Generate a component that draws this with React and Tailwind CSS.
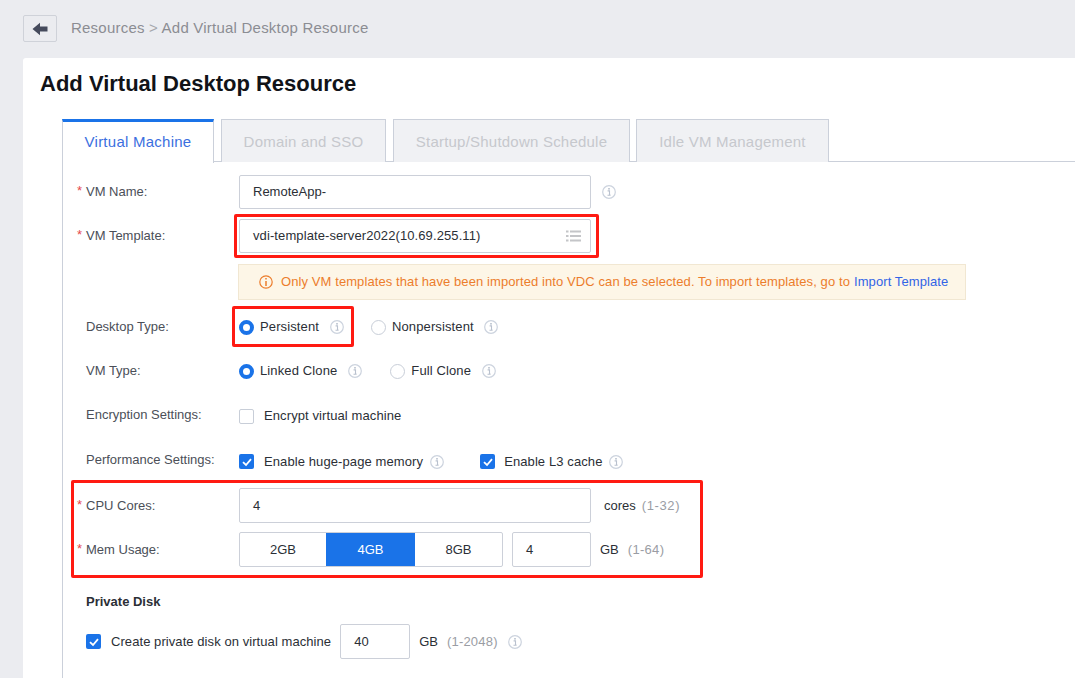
import React from "react";

const Info = ({ className = "" }) => (
  <svg viewBox="0 0 14 14" className={`w-[14px] h-[14px] shrink-0 ${className}`} fill="none">
    <circle cx="7" cy="7" r="6.3" stroke="#ccd3de" strokeWidth="1.2" />
    <rect x="6.2" y="3" width="1.6" height="1.6" fill="#b9c1ce" />
    <path d="M5.6 5.9H7.5V10H8.5M5.5 10.2H8.6" stroke="#b9c1ce" strokeWidth="1.1" />
  </svg>
);

const Radio = ({ on }) =>
  on ? (
    <span className="w-[15px] h-[15px] rounded-full border-[4px] border-[#1a73e8] bg-white shrink-0" />
  ) : (
    <span className="w-[15px] h-[15px] rounded-full border border-[#c8ced8] bg-white shrink-0" />
  );

const Check = ({ on }) =>
  on ? (
    <span className="w-[15px] h-[15px] rounded-[2px] bg-[#1a73e8] flex items-center justify-center shrink-0">
      <svg viewBox="0 0 14 14" className="w-[14px] h-[14px]" fill="none">
        <path d="M3 7.2L6 10L11 4.2" stroke="#fff" strokeWidth="1.8" />
      </svg>
    </span>
  ) : (
    <span className="w-[15px] h-[15px] rounded-[2px] border border-[#c8ced8] bg-white shrink-0" />
  );

const Row = ({ label, req, h = "h-[34px]", mt = "", children }) => (
  <div className={`flex items-center ${h} ${mt}`}>
    <div className="w-[153px] shrink-0 relative text-[#4b4f58]">
      {req && <span className="absolute left-[-9px] top-[-1px] text-[#e5484d]">*</span>}
      {label}
    </div>
    {children}
  </div>
);

const Input = ({ value, className = "", children }) => (
  <div className={`h-full flex items-center justify-between rounded-[2px] border border-[#ccd0d9] bg-white pl-[13px] pr-[9px] text-[#2b2f36] ${className}`}>
    <span>{value}</span>
    {children}
  </div>
);

const Tab = ({ children, className = "" }) => (
  <div className={`h-[43px] pt-[2px] flex items-center justify-center border border-b-0 border-[#cbd0da] bg-[#f0f1f4] text-[#c6c8cd] text-[15px] tracking-[0.22px] ${className}`}>
    {children}
  </div>
);

export default function App() {
  return (
    <div className="relative h-[678px] w-[1075px] overflow-hidden bg-[#ebecf0] [font-family:Liberation_Sans,Arial,sans-serif] text-[13px]">
      <header className="h-[58px] pl-[23px] pt-[15px] flex items-start gap-[14px]">
        <button className="w-[34px] h-[27px] border border-[#cfd2d9] rounded-[2px] flex items-center justify-center">
          <svg viewBox="0 0 16 14" className="w-[16px] h-[14px]">
            <path d="M0.5 7L8 0.8V4.4H15.5V9.6H8V13.2Z" fill="#454a5c" />
          </svg>
        </button>
        <div className="h-[26px] flex items-center text-[15px] text-[#8b8d93] whitespace-pre tracking-[0.22px]">
          Resources <span className="text-[#a5a7ac]">&gt;</span> Add Virtual Desktop Resource
        </div>
      </header>

      <main className="ml-[23px] h-[620px] bg-white rounded-tl-[3px] pt-[12px]">
        <h1 className="ml-[17px] h-[28px] leading-[28px] text-[22px] font-bold text-[#111318]">
          Add Virtual Desktop Resource
        </h1>
        <div className="ml-[39px] mt-[21px]">
          <div className="flex h-[43px] border-b border-[#cbd0da]">
            <div className="w-[152px] h-[44px] flex items-center justify-center border-x border-[#cbd0da] border-t-[3px] border-t-[#1a73e8] bg-white text-[#3b6fe0] text-[15px] tracking-[0.25px] z-10">
              Virtual Machine
            </div>
            <Tab className="w-[165px] ml-[7px]">Domain and SSO</Tab>
            <Tab className="w-[237px] ml-[7px]">Startup/Shutdown Schedule</Tab>
            <Tab className="w-[193px] ml-[6px]">Idle VM Management</Tab>
          </div>

          <div className="border-l border-[#cbd0da] pl-[23px] pt-[13px] h-[520px]">
            <Row label="VM Name:" req>
              <Input value="RemoteApp-" className="w-[352px]" />
              <Info className="ml-[11px]" />
            </Row>
            <Row label="VM Template:" req mt="mt-[10px]">
              <Input value="vdi-template-server2022(10.69.255.11)" className="w-[352px] tracking-[0.1px]">
                <svg viewBox="0 0 15 12" className="w-[15px] h-[12px]" fill="#c4c5c8">
                  <rect x="0" y="0.5" width="2.5" height="2" />
                  <rect x="4" y="0.5" width="11" height="2" />
                  <rect x="0" y="5" width="2.5" height="2" />
                  <rect x="4" y="5" width="11" height="2" />
                  <rect x="0" y="9.5" width="2.5" height="2" />
                  <rect x="4" y="9.5" width="11" height="2" />
                </svg>
              </Input>
            </Row>
            <div className="ml-[152px] mt-[11px] h-[36px] w-[728px] flex items-center border border-[#f1e7d2] bg-[#fdf6e7] pl-[20px] text-[#ec7d2c] whitespace-nowrap tracking-[0.09px]">
              <svg viewBox="0 0 14 14" className="w-[14px] h-[14px] mr-[8px] shrink-0" fill="none">
                <circle cx="7" cy="7" r="6.2" stroke="#ec7d2c" strokeWidth="1.2" />
                <path d="M7 3V4.6M7 6V11" stroke="#ec7d2c" strokeWidth="1.5" />
              </svg>
              Only VM templates that have been imported into VDC can be selected. To import templates, go to
              <span className="ml-[4px] text-[#3264e6]">Import Template</span>
            </div>

            <Row label="Desktop Type:" mt="mt-[10px]">
              <div className="flex items-center text-[#2b2f36] tracking-[0.12px]">
                <Radio on />
                <span className="ml-[6px]">Persistent</span>
                <Info className="ml-[11px]" />
                <span className="ml-[27px] flex items-center">
                  <Radio />
                  <span className="ml-[6px]">Nonpersistent</span>
                  <Info className="ml-[10px]" />
                </span>
              </div>
            </Row>
            <Row label="VM Type:" mt="mt-[10px]">
              <div className="flex items-center text-[#2b2f36] tracking-[0.12px]">
                <Radio on />
                <span className="ml-[6px]">Linked Clone</span>
                <Info className="ml-[11px]" />
                <span className="ml-[28px] flex items-center">
                  <Radio />
                  <span className="ml-[6px]">Full Clone</span>
                  <Info className="ml-[11px]" />
                </span>
              </div>
            </Row>
            <Row label="Encryption Settings:" mt="mt-[10px]">
              <div className="flex items-center text-[#2b2f36] pt-[2px] tracking-[0.1px]">
                <Check />
                <span className="ml-[10px]">Encrypt virtual machine</span>
              </div>
            </Row>
            <Row label="Performance Settings:" mt="mt-[11px]">
              <div className="flex items-center text-[#2b2f36] pt-[3px] tracking-[0.1px]">
                <Check on />
                <span className="ml-[10px]">Enable huge-page memory</span>
                <Info className="ml-[7px]" />
                <span className="ml-[36px] flex items-center">
                  <Check on />
                  <span className="ml-[9px]">Enable L3 cache</span>
                  <Info className="ml-[7px]" />
                </span>
              </div>
            </Row>
            <Row label="CPU Cores:" req h="h-[35px]" mt="mt-[11px]">
              <Input value="4" className="w-[352px]" />
              <span className="ml-[13px] text-[#2b2f36]">cores</span>
              <span className="ml-[6px] text-[#9a9da4] tracking-[0.6px]">(1-32)</span>
            </Row>
            <Row label="Mem Usage:" req h="h-[35px]" mt="mt-[9px]">
              <div className="h-full w-[264px] flex border border-[#ccd0d9] rounded-[2px] text-[#2b2f36]">
                <div className="w-[86px] flex items-center justify-center">2GB</div>
                <div className="w-[89px] flex items-center justify-center bg-[#1a73e8] text-white">4GB</div>
                <div className="w-[87px] flex items-center justify-center">8GB</div>
              </div>
              <Input value="4" className="w-[79px] ml-[9px]" />
              <span className="ml-[9px] text-[#2b2f36]">GB</span>
              <span className="ml-[9px] text-[#9a9da4] tracking-[0.3px]">(1-64)</span>
            </Row>
            <div className="mt-[27px] h-[16px] leading-[16px] font-bold text-[#2b2f36]">Private Disk</div>
            <div className="mt-[14px] h-[35px] flex items-center text-[#2b2f36]">
              <Check on />
              <span className="ml-[10px] tracking-[0.07px]">Create private disk on virtual machine</span>
              <Input value="40" className="w-[70px] ml-[9px]" />
              <span className="ml-[9px]">GB</span>
              <span className="ml-[9px] text-[#9a9da4] tracking-[0.2px]">(1-2048)</span>
              <Info className="ml-[10px]" />
            </div>
          </div>
        </div>
      </main>

      <div className="absolute left-[234px] top-[214px] w-[365px] h-[44px] border-[3px] border-[#ff1a12] rounded-[2px]" />
      <div className="absolute left-[232px] top-[306px] w-[122px] h-[41px] border-[3px] border-[#ff1a12] rounded-[2px]" />
      <div className="absolute left-[71px] top-[480px] w-[632px] h-[98px] border-[3px] border-[#ff1a12] rounded-[2px]" />
    </div>
  );
}
